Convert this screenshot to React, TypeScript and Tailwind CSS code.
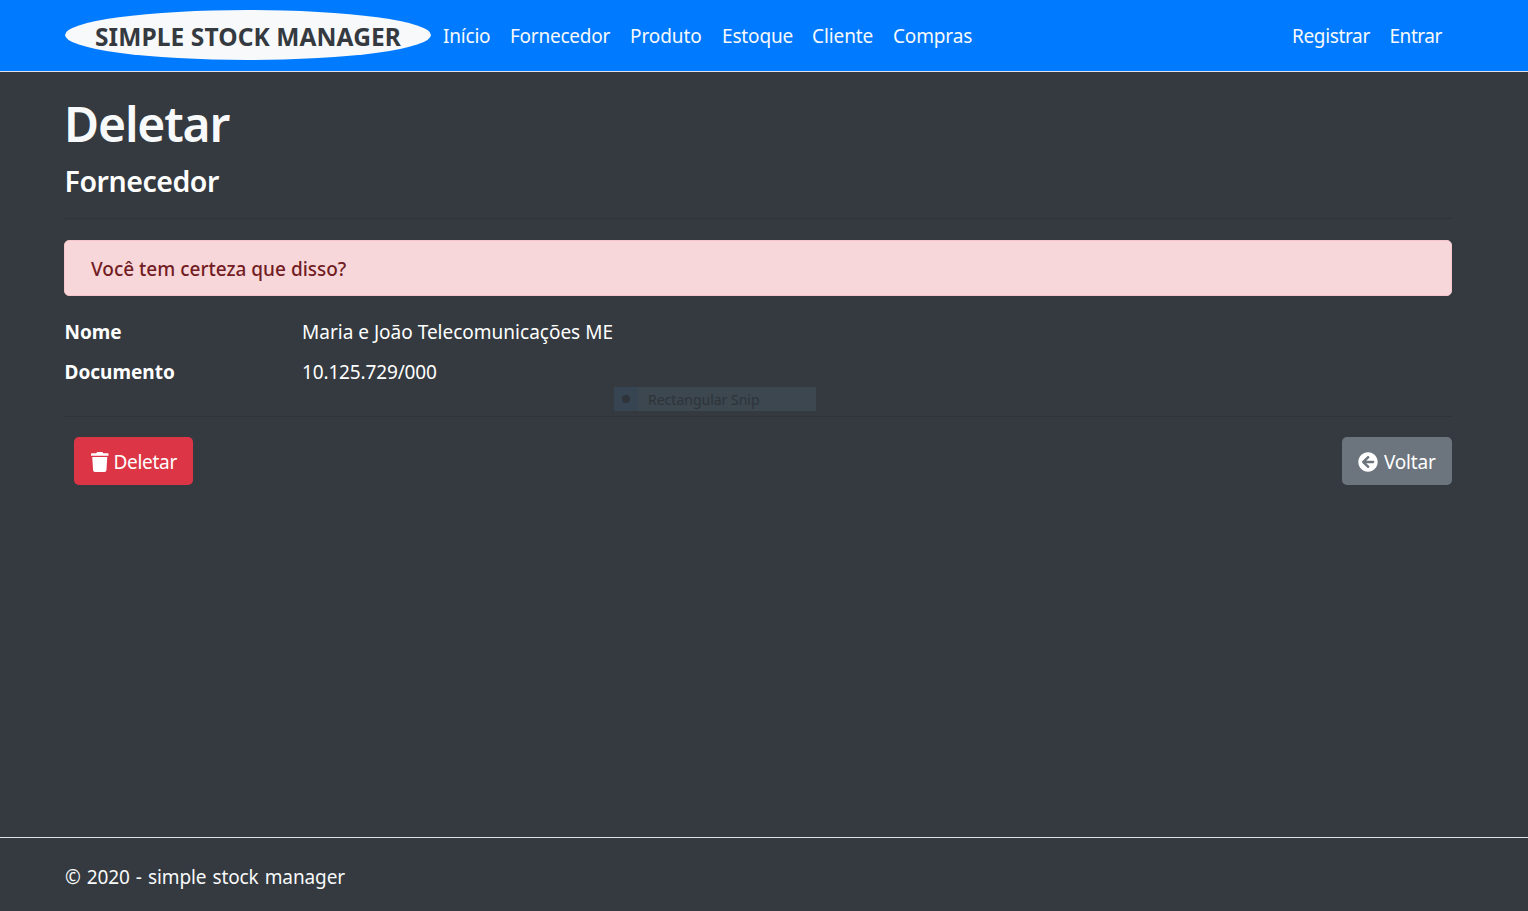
import { FaArrowCircleLeft, FaTrash } from "react-icons/fa";

const links = [
  { label: "Início", size: "w-[67px] tracking-[-0.2px]" },
  { label: "Fornecedor", size: "w-[120px] tracking-[-0.25px]" },
  { label: "Produto", size: "w-[92px] tracking-[-0.1px]" },
  { label: "Estoque", size: "w-[90px] tracking-[-0.15px]" },
  { label: "Cliente", size: "w-[81px] tracking-[-0.1px]" },
  { label: "Compras", size: "w-[99px] tracking-[-0.15px]" },
];

function Header() {
  return (
    <header className="flex h-[72px] items-start border-b border-[#dee2e6] bg-[#007bff] pr-[76px] pl-[65px] text-[#f8f9fa]">
      <a className="mt-[10px] flex h-[50px] w-[366px] items-center justify-center rounded-[50%] bg-[#f8f9fa] pt-1 text-[24.5px] font-bold whitespace-nowrap text-[#343a40]">
        <span className="tracking-[0.1px]">SIMPLE STOCK MANAGER</span>
      </a>
      <nav className="flex grow pt-[21px] pl-[2px]">
        {links.map((l) => (
          <a key={l.label} className={`${l.size} pl-[10px] whitespace-nowrap`}>{l.label}</a>
        ))}
        <a className="ml-auto w-[98px] pl-[10px] tracking-[-0.35px]">Registrar</a>
        <a className="w-[72px] pl-[9.5px] tracking-[-0.45px]">Entrar</a>
      </nav>
    </header>
  );
}

export default function App() {
  return (
    <div className="flex h-[911px] flex-col overflow-hidden bg-[#343a40] font-['Noto_Sans',sans-serif] text-[19px] leading-[30px] text-[#f8f9fa]">
      <Header />
      <main className="flex grow flex-col pr-[76px] pl-16">
        <h1 className="mt-[22px] text-[48px] leading-[60px] font-semibold tracking-[-1.15px]">Deletar</h1>
        <h2 className="mt-[9px] pl-[0.5px] text-[28.5px] leading-[36px] font-semibold tracking-[-0.45px] text-white">Fornecedor</h2>
        <hr className="mt-[19px] border-[#2f3439]" />
        <div className="mt-[21px] flex h-[56px] items-center rounded-[5px] border border-[#f5c6cb] bg-[#f8d7da] pt-0.5 pl-[26px] font-medium text-[#721c24]">
          <span>Você tem certeza que disso?</span>
        </div>
        <dl className="mt-[21px] grid grid-cols-[238px_1fr] gap-y-[10px] text-white">
          <dt className="pl-[0.5px] font-bold">Nome</dt>
          <dd>Maria e João Telecomunicações ME</dd>
          <dt className="pl-[0.5px] font-bold">Documento</dt>
          <dd className="tracking-[-0.15px]">10.125.729/000</dd>
        </dl>
        <hr className="mt-[29px] border-[#2f3439]" />
        <div className="mt-[20px] flex justify-between pl-[10px] text-white">
          <button className="flex h-12 w-[119px] items-center gap-[5px] rounded-[5px] bg-[#dc3545] pt-0.5 pl-[17px] tracking-[-0.3px]">
            <FaTrash className="h-5 w-[17.5px] shrink-0" />
            <span>Deletar</span>
          </button>
          <button className="flex h-12 w-[110px] items-center gap-[6px] rounded-[5px] bg-[#6c757d] pt-0.5 pl-4 tracking-[-0.2px]">
            <FaArrowCircleLeft className="size-5 shrink-0" />
            <span>Voltar</span>
          </button>
        </div>
      </main>
      <footer className="h-[74px] shrink-0 border-t border-[#dee2e6] pt-[24px] pl-[65px] tracking-[-0.1px] [word-spacing:1.2px]">
        © 2020 - simple stock manager
      </footer>
      <div className="absolute top-[387px] left-[614px] flex h-6 w-[202px] items-center bg-[#3c474f] text-[14px] text-[#2e343a]">
        <span className="flex h-6 w-6 items-center justify-center bg-[#374452]">
          <span className="size-2 rounded-full bg-[#2e343a]" />
        </span>
        <span className="ml-[10px] pt-0.5">Rectangular Snip</span>
      </div>
    </div>
  );
}
